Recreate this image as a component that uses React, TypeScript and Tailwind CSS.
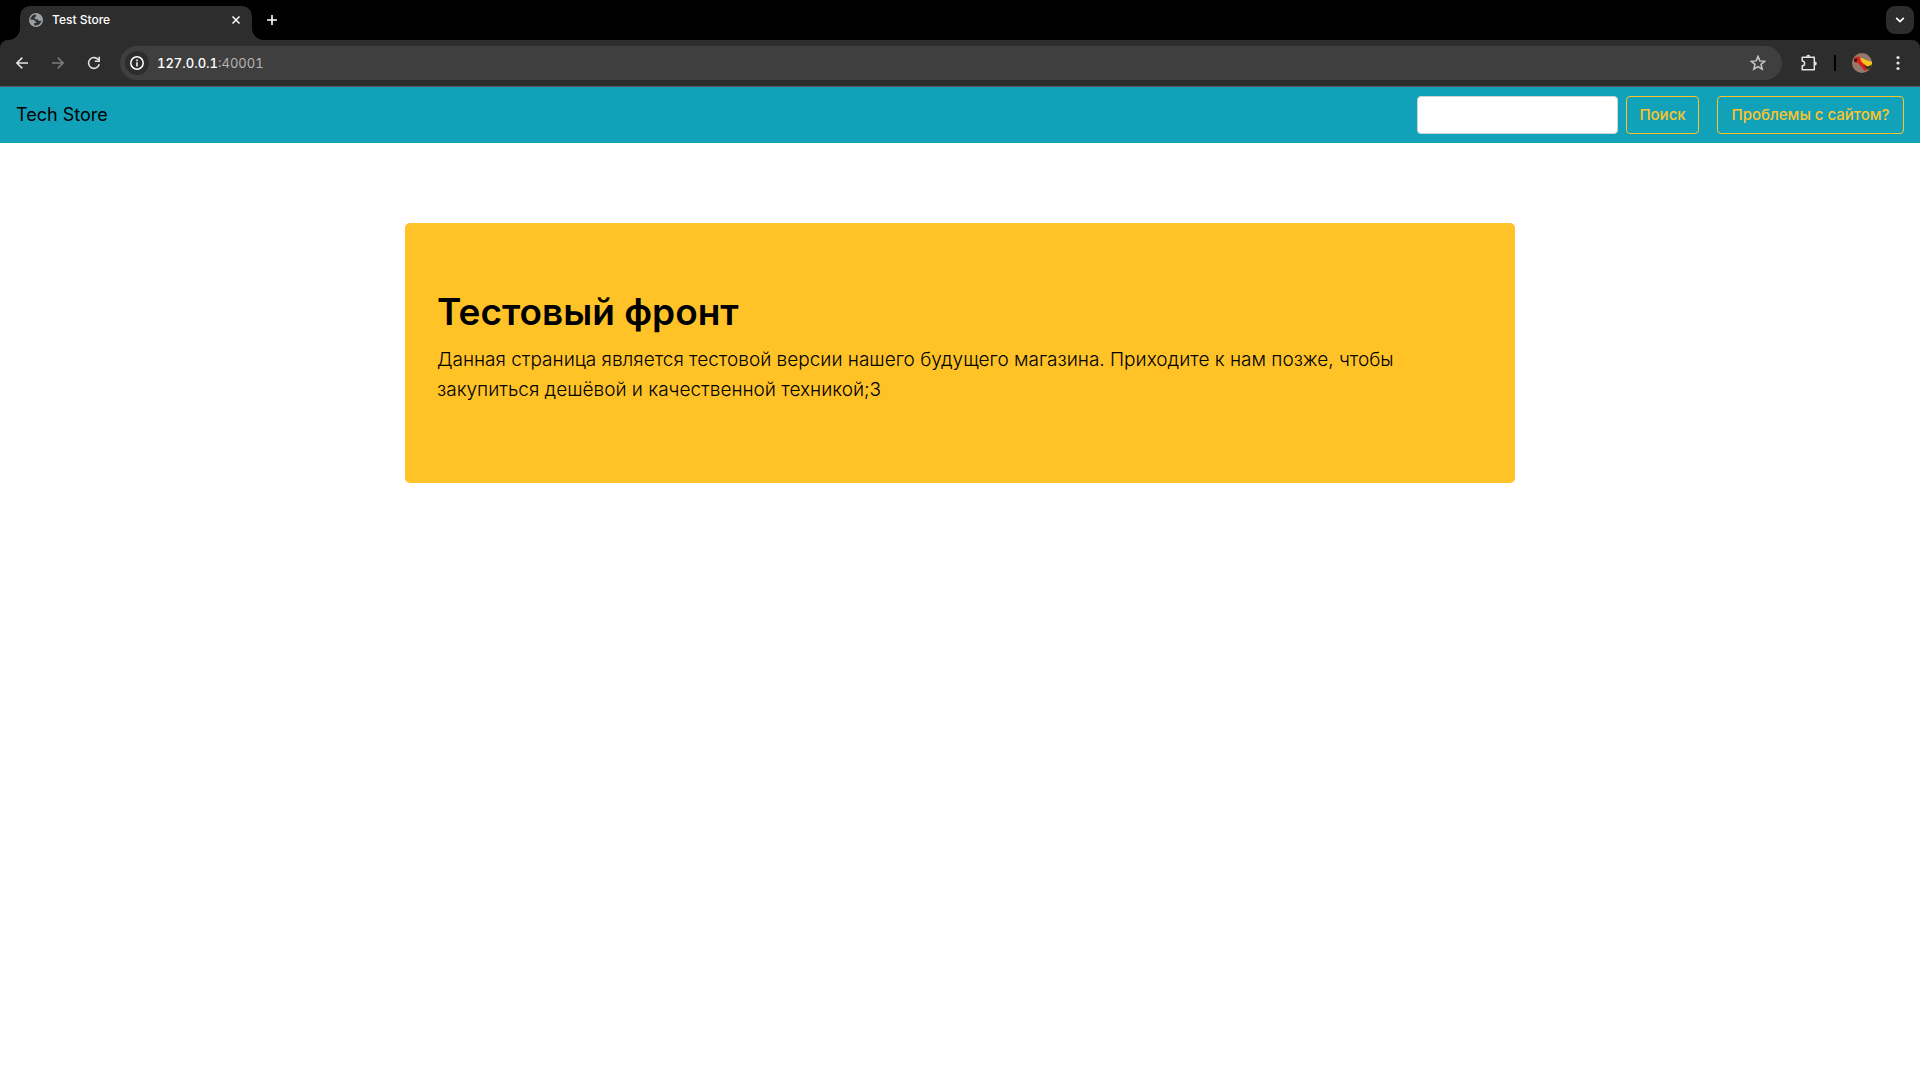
import { useState } from "react";

function GlobeIcon() {
  return (
    <svg width="14" height="14" viewBox="0 0 14 14" aria-hidden="true">
      <circle cx="7" cy="7" r="7" fill="#9aa0a6" />
      <path
        d="M6.2 1.6C3.6 2 1.6 4.200 1.500 6.800H4.300C5.400 6.800 5.900 7.600 5.900 8.500H7.300V9.900H5.200V12.200C8.600 13.200 12 10.900 12.400 7.500C11.600 8 10.800 8.200 10 7.900C9 7.500 9.200 6.200 8 6.200H5.800V4.500C5.800 3.800 6.400 3.600 7.300 3.600C7.300 2.600 6.900 2.100 6.200 1.600Z"
        fill="#2d2d2d"
      />
    </svg>
  );
}

function Tab() {
  return (
    <div className="relative ml-5 flex h-[34px] w-[232px] items-center rounded-t-[10px] bg-[#2d2d2d] pr-2 pb-[6px] pl-[9px]">
      {/* curved feet of the tab */}
      <svg className="absolute bottom-0 -left-3" width="12" height="12" viewBox="0 0 12 12">
        <path d="M12 0V12H0A12 12 0 0 0 12 0Z" fill="#2d2d2d" />
      </svg>
      <svg className="absolute -right-3 bottom-0" width="12" height="12" viewBox="0 0 12 12">
        <path d="M0 0V12H12A12 12 0 0 1 0 0Z" fill="#2d2d2d" />
      </svg>
      <GlobeIcon />
      <span className="ml-[9px] flex-1 text-[12px] leading-4 font-medium text-white">Test Store</span>
      <button aria-label="Close tab" className="flex h-4 w-4 items-center justify-center text-white">
        <svg width="8" height="8" viewBox="0 0 8 8" fill="none" stroke="currentColor" strokeWidth="1.5">
          <path d="M0.500 0.500L7.500 7.500M7.500 0.500L0.500 7.500" />
        </svg>
      </button>
    </div>
  );
}

function TabStrip() {
  return (
    <div className="flex h-10 items-start bg-black pt-[6px]">
      <Tab />
      <button aria-label="New tab" className="ml-[6px] flex h-7 w-7 items-center justify-center text-white">
        <svg width="10" height="10" viewBox="0 0 10 10" fill="none" stroke="currentColor" strokeWidth="1.6">
          <path d="M5 0V10M0 5H10" />
        </svg>
      </button>
      <button
        aria-label="Search tabs"
        className="mr-[6px] ml-auto flex h-7 w-7 items-center justify-center rounded-[9px] bg-[#2d2d2d] text-white"
      >
        <svg width="10" height="6" viewBox="0 0 10 6" fill="none" stroke="currentColor" strokeWidth="1.7">
          <path d="M1.200 0.800L5 4.600L8.800 0.800" />
        </svg>
      </button>
    </div>
  );
}

function Toolbar() {
  return (
    <div className="bg-black">
      <div className="flex h-[47px] items-center rounded-t-lg border-b border-[#5a5a5a] bg-[#2d2d2d] px-3 text-[#e3e3e3]">
        <button aria-label="Back" className="flex h-6 w-5 items-center justify-center">
          <svg width="12" height="12" viewBox="0 0 12 12" fill="none" stroke="currentColor" strokeWidth="1.5">
            <path d="M12 6H1.200M6.300 0.600L0.900 6L6.300 11.400" />
          </svg>
        </button>
        <button aria-label="Forward" className="ml-4 flex h-6 w-5 items-center justify-center text-[#7c7c7c]">
          <svg width="12" height="12" viewBox="0 0 12 12" fill="none" stroke="currentColor" strokeWidth="1.5">
            <path d="M0 6H10.800M5.700 0.600L11.100 6L5.700 11.400" />
          </svg>
        </button>
        <button aria-label="Reload" className="ml-4 flex h-6 w-5 items-center justify-center">
          <svg width="14" height="14" viewBox="0 0 14 14" fill="none" stroke="currentColor" strokeWidth="1.600">
            <path d="M12.200 8.200A5.400 5.400 0 1 1 11.600 4.200" />
            <path d="M12.200 0.800V5.200H7.800" />
          </svg>
        </button>

        <div className="ml-4 flex h-[34px] flex-1 items-center rounded-full bg-[#3f3f3f] pr-4 pl-[5px]">
          <button aria-label="Site information" className="flex h-6 w-6 items-center justify-center rounded-full bg-[#2d2d2d] text-white">
            <svg width="14" height="14" viewBox="0 0 14 14" fill="none" stroke="currentColor" strokeWidth="1.500">
              <circle cx="7" cy="7" r="6.200" />
              <path d="M7 6.300V10.400M7 3.600V5.200" />
            </svg>
          </button>
          <div role="textbox" aria-label="Address" className="ml-2 flex-1 text-[13px] leading-5 text-[#b4b4b4] tabular-nums">
            <span className="font-medium text-white">127.0.0.1</span>:40001
          </div>
          <button aria-label="Bookmark this page" className="flex h-4 w-4 items-center justify-center text-[#c7c7c7]">
            <svg className="shrink-0" width="16" height="16" viewBox="0 0 16 16" fill="none" stroke="currentColor" strokeWidth="1.500">
              <path d="M8 1.400L9.800 5.900L14.700 6.300L11 9.300L12.200 14.200L8 11.600L3.800 14.200L5 9.300L1.300 6.300L6.200 5.900Z" />
            </svg>
          </button>
        </div>

        <button aria-label="Extensions" className="ml-[18px] flex h-6 w-[18px] items-center justify-center">
          <svg width="18" height="18" viewBox="0 0 18 18" fill="none" stroke="currentColor" strokeWidth="1.500">
            <path d="M2.200 3.200H14.300V15.700H2.200V11.800C5.400 11.800 5.400 7 2.200 7Z" strokeLinejoin="round" />
            <path d="M6.300 2.700A2 2 0 0 1 10.300 2.700ZM14.800 7.400A2 2 0 0 1 14.800 11.400Z" fill="currentColor" stroke="none" />
          </svg>
        </button>
        <div className="ml-4 h-4 w-[2px] bg-black" />
        <button aria-label="Profile" className="ml-4 h-5 w-5 overflow-hidden rounded-full">
          <svg width="20" height="20" viewBox="0 0 20 20">
            <rect width="20" height="20" fill="#96796a" />
            <path d="M2 6C3 3.500 6 3 9 4.500L12 9L16 16L13 18L6 10L2 9Z" fill="#d8201c" />
            <path d="M8 4.500C11 5 14 8 20 8.500V13C16 14 12 12 9 8Z" fill="#fbc51c" />
            <path d="M11 12C14 14 17 14 20 11V15C17 18 14 16 11 12Z" fill="#33351a" />
            <path d="M2 6.500L5 5.500L4.500 9L2.500 8.500Z" fill="#26120f" />
          </svg>
        </button>
        <button aria-label="Menu" className="ml-4 flex h-6 w-5 items-center justify-center">
          <svg width="4" height="16" viewBox="0 0 4 16" fill="currentColor">
            <circle cx="2" cy="2.500" r="1.600" />
            <circle cx="2" cy="8" r="1.600" />
            <circle cx="2" cy="13.500" r="1.600" />
          </svg>
        </button>
      </div>
    </div>
  );
}

function Navbar() {
  const [query, setQuery] = useState("");

  return (
    <nav className="flex items-center justify-between bg-[#11a2ba] px-4 py-[9px]">
      <a href="#" className="text-[18px] leading-[30px] text-black">
        Tech Store
      </a>
      <div className="flex items-center">
        <form className="flex items-center gap-2" onSubmit={(e) => e.preventDefault()}>
          <input
            type="search"
            aria-label="Поиск"
            value={query}
            onChange={(e) => setQuery(e.target.value)}
            className="h-[38px] w-[201px] rounded border border-[#ced4da] bg-white px-3 text-[15px]"
          />
          <button className="h-[38px] w-[73px] rounded border border-[#ffc328] text-[15px] leading-6 font-medium text-[#ffc328]">
            Поиск
          </button>
        </form>
        <button className="ml-[18px] h-[38px] w-[187px] rounded border border-[#ffc328] text-[15px] leading-6 font-medium whitespace-nowrap text-[#ffc328]">
          Проблемы с сайтом?
        </button>
      </div>
    </nav>
  );
}

function App() {
  return (
    <div className="min-h-screen bg-white font-['Inter',sans-serif] text-black">
      <TabStrip />
      <Toolbar />
      <Navbar />
      <main className="mx-auto mt-20 max-w-[1110px] rounded-[5px] bg-[#ffc328] px-8 py-16">
        <h1 className="mb-2 text-[37px] leading-[50px] font-semibold">Тестовый фронт</h1>
        <p className="mb-[14px] text-[19px] leading-[30px] font-light">
          Данная страница является тестовой версии нашего будущего магазина. Приходите к нам позже, чтобы
          закупиться дешёвой и качественной техникой;3
        </p>
      </main>
    </div>
  );
}

export default App;
